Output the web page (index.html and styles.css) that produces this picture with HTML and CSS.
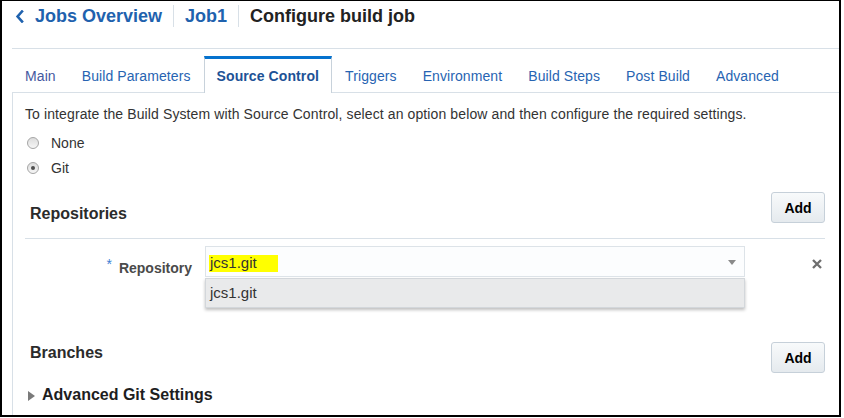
FILE: index.html
```html
<!DOCTYPE html>
<html lang="en">
<head>
<meta charset="utf-8">
<title>Configure build job</title>
<link rel="stylesheet" href="styles.css">
</head>
<body>
<div class="frame">
  <div class="page">
    <header class="header">
      <svg class="back" width="9" height="13" viewBox="0 0 9 13" aria-hidden="true"><path d="M7 1.5 L2.6 6.5 L7 11.5" fill="none" stroke="#1f62ae" stroke-width="2.6" stroke-linecap="square"/></svg>
      <span class="crumb">Jobs Overview</span>
      <span class="sep"></span>
      <span class="crumb">Job1</span>
      <span class="sep"></span>
      <span class="title">Configure build job</span>
    </header>
    <nav class="tabs">
      <span class="tab tab-visited">Main</span>
      <span class="tab">Build Parameters</span>
      <span class="tab active">Source Control</span>
      <span class="tab">Triggers</span>
      <span class="tab">Environment</span>
      <span class="tab">Build Steps</span>
      <span class="tab">Post Build</span>
      <span class="tab">Advanced</span>
    </nav>
    <main class="panel">
      <p class="intro">To integrate the Build System with Source Control, select an option below and then configure the required settings.</p>
      <div class="radios">
        <div class="radio-row"><span class="radio"></span>None</div>
        <div class="radio-row"><span class="radio checked"></span>Git</div>
      </div>
      <section class="section-head repos">
        <h2 class="section-title">Repositories</h2>
        <button class="btn">Add</button>
      </section>
      <div class="repo-row">
        <div class="field-label"><span class="req">*</span>Repository</div>
        <div class="combo">
          <span class="hl">jcs1.git</span>
          <svg class="arrow" width="8" height="5" viewBox="0 0 8 5" aria-hidden="true"><path d="M0 0 H8 L4 5 Z" fill="#8a8a8a"/></svg>
          <div class="dropdown"><div class="option">jcs1.git</div></div>
        </div>
        <svg class="remove" width="10" height="10" viewBox="0 0 10 10" aria-hidden="true"><path d="M1 1 L9 9 M9 1 L1 9" stroke="#6e6e6e" stroke-width="2.3"/></svg>
      </div>
      <section class="section-head branches">
        <h2 class="section-title">Branches</h2>
        <button class="btn">Add</button>
      </section>
      <div class="disclosure">
        <svg class="tri" width="7" height="10" viewBox="0 0 7 10" aria-hidden="true"><path d="M0 0 L7 5 L0 10 Z" fill="#7a7a7a"/></svg>
        <h2 class="disclosure-title">Advanced Git Settings</h2>
      </div>
    </main>
  </div>
</div>
</body>
</html>
```

FILE: styles.css
```css
body {
  margin: 0;
  background: #fff;
  font-family: "Liberation Sans", Arial, sans-serif;
}

.frame {
  width: 841px;
  height: 417px;
  box-sizing: border-box;
  border: 2px solid #000;
  border-top-width: 1px;
  overflow: hidden;
  background: #fff;
}

.page {
  margin-left: 10px;
}

.header {
  display: flex;
  align-items: flex-start;
  height: 43px;
  padding: 4px 0 0 3px;
  border-bottom: 1px solid #d8e0e7;
  font-size: 18px;
  font-weight: bold;
  line-height: 22px;
}

.back {
  margin: 5px 11px 0 0;
}

.crumb {
  color: #1f62ae;
}

.sep {
  width: 1px;
  height: 22px;
  margin: 0 11px;
  background: #d8e0e7;
}

.title {
  color: #222;
}

.tabs {
  display: flex;
  padding-top: 7px;
  border-bottom: 1px solid #d8e0e7;
}

.tab {
  box-sizing: border-box;
  height: 37px;
  margin-bottom: -1px;
  padding: 9px 12px 0;
  border: 1px solid transparent;
  border-top-width: 3px;
  border-bottom: 0;
  font-size: 14px;
  line-height: 16px;
  letter-spacing: 0.09px;
  color: #2764b2;
  white-space: nowrap;
}

.tab-visited {
  color: #45589f;
}

.tab.active {
  border-color: #c8d2db;
  border-top-color: #0572ce;
  background: #fff;
  color: #1d5296;
  font-weight: bold;
  letter-spacing: 0.1px;
}

.panel {
  display: block;
  height: 400px;
  padding: 12px 14px 0 12px;
  border-left: 1px solid #d8e0e7;
}

.intro {
  margin: 0;
  font-size: 14px;
  line-height: 18px;
  letter-spacing: 0.11px;
  color: #333;
  white-space: nowrap;
}

.radios {
  margin-top: 7px;
}

.radio-row {
  display: flex;
  align-items: center;
  height: 25px;
  font-size: 14px;
  color: #333;
}

.radio {
  position: relative;
  width: 12px;
  height: 12px;
  box-sizing: border-box;
  margin: 0 12px 0 2px;
  border: 1px solid #a5a5a5;
  border-radius: 50%;
  background: linear-gradient(#dcdcdc, #f6f6f6);
}

.radio.checked::after {
  content: "";
  position: absolute;
  left: 3px;
  top: 3px;
  width: 4px;
  height: 4px;
  border-radius: 50%;
  background: #4f4f4f;
}

.section-head {
  display: flex;
  justify-content: space-between;
  align-items: flex-start;
}

.section-title {
  margin: 0;
  padding-left: 5px;
  font-size: 16px;
  line-height: 20px;
  font-weight: bold;
  color: #2b2b2b;
}

.repos {
  margin-top: 12px;
  padding-bottom: 14px;
  border-bottom: 1px solid #d8e0e7;
}

.repos .section-title {
  margin-top: 12px;
}

.branches {
  margin-top: 65px;
}

.branches .section-title {
  margin-top: 1px;
}

.btn {
  width: 54px;
  height: 31px;
  box-sizing: border-box;
  padding: 0;
  border: 1px solid #c6d0d9;
  border-radius: 3px;
  background: linear-gradient(#f8fafb, #e5eaee);
  font: bold 14px "Liberation Sans", Arial, sans-serif;
  color: #000;
}

.repo-row {
  display: flex;
  align-items: flex-start;
  margin-top: 7px;
}

.field-label {
  width: 167px;
  box-sizing: border-box;
  margin-right: 13px;
  padding-top: 13px;
  text-align: right;
  font-size: 14px;
  line-height: 18px;
  font-weight: bold;
  color: #4a4a4a;
}

.req {
  margin-right: 7px;
  font-weight: normal;
  color: #3b7fd4;
  line-height: 0;
  vertical-align: 4px;
}

.combo {
  position: relative;
  display: flex;
  justify-content: space-between;
  align-items: flex-start;
  width: 540px;
  height: 31px;
  box-sizing: border-box;
  padding: 8px 8px 0 3px;
  border: 1px solid #dde3e8;
  background: #fcfdfe;
}

.hl {
  display: block;
  width: 68px;
  padding: 0 0 2px 1px;
  background: #ffff00;
  font-size: 15px;
  line-height: 15px;
  color: #333;
}

.arrow {
  margin-top: 5px;
}

.dropdown {
  position: absolute;
  left: -1px;
  top: 31px;
  width: 540px;
  height: 30px;
  box-sizing: border-box;
  padding-left: 4px;
  border: 1px solid #d3d7db;
  background: #e9eaeb;
  box-shadow: 0 2px 3px rgba(0, 0, 0, 0.25);
  font-size: 15px;
  line-height: 28px;
  color: #333;
}

.remove {
  margin: 13px 3px 0 auto;
}

.disclosure {
  display: flex;
  align-items: flex-start;
  margin-top: 12px;
}

.tri {
  margin: 6px 7px 0 3px;
}

.disclosure-title {
  margin: 0;
  font-size: 16px;
  line-height: 20px;
  font-weight: bold;
  color: #1e1e1e;
}
```
